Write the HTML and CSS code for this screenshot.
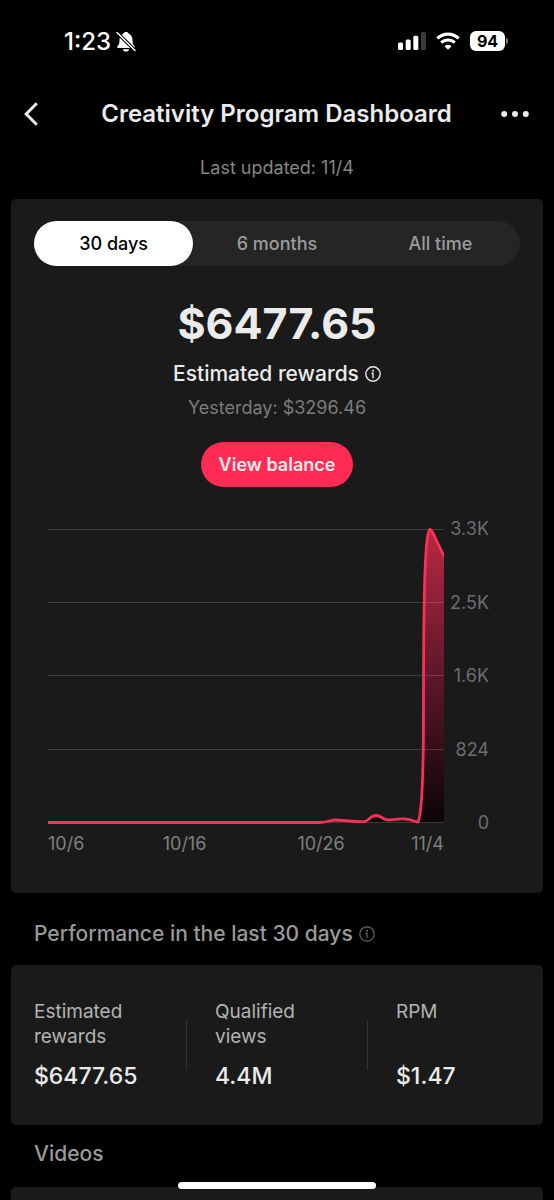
FILE: index.html
```html
<!DOCTYPE html>
<html lang="en">
<head>
<meta charset="utf-8">
<meta name="viewport" content="width=device-width, initial-scale=1">
<title>Creativity Program Dashboard</title>
<link rel="stylesheet" href="styles.css">
</head>
<body>
<div class="app">
  <div class="status">
    <div class="status-left">
      <span class="clock">1:23</span>
      <svg class="bell" viewBox="0 0 20 21" width="20" height="21" aria-hidden="true">
        <path fill="#fff" d="M10 1c1.400 0 2.300.7 2.700 1.700C15.400 3.700 16.500 6 16.500 9c0 3.600.8 4.900 2 6.100.7.800.4 2-.7 2H2.200c-1.100 0-1.400-1.200-.7-2C2.700 13.900 3.500 12.600 3.500 9c0-3 1.100-5.300 3.800-6.300C7.700 1.700 8.600 1 10 1zM6.800 18.200h6.400c-.3 1.500-1.500 2.300-3.200 2.300s-2.900-.8-3.200-2.300z"/>
        <path stroke="#000" stroke-width="3.400" d="M1 1.500l18 18"/>
        <path stroke="#fff" stroke-width="1.500" stroke-linecap="round" d="M1 1.500l18 18"/>
      </svg>
    </div>
    <div class="status-right">
      <svg viewBox="0 0 28 18" width="28" height="18" aria-hidden="true">
        <g fill="#fff"><rect y="10.500" width="5" height="7.500" rx="1.500"/><rect x="7.700" y="7.500" width="5" height="10.500" rx="1.500"/><rect x="15.300" y="3.800" width="5" height="14.200" rx="1.500"/></g>
        <rect x="23" width="5" height="18" rx="1.500" fill="#3a3a3a"/>
      </svg>
      <svg viewBox="0 0 24 18" width="24" height="18" aria-hidden="true">
        <g fill="none" stroke="#fff" stroke-width="3.200"><path d="M1.300 6.400a15.300 15.300 0 0 1 21.400 0"/><path d="M5.300 10.700a9.600 9.600 0 0 1 13.400 0"/></g>
        <path fill="#fff" d="M12 17.800l-3.500-3.500a5 5 0 0 1 7 0z"/>
      </svg>
      <div class="battery"><span class="battery-level">94</span><span class="battery-tip"></span></div>
    </div>
  </div>

  <header class="nav">
    <button class="icon-button" type="button" aria-label="Back">
      <svg viewBox="0 0 14 24" width="14" height="24" aria-hidden="true"><path fill="none" stroke="#ebebeb" stroke-width="3" d="M12.800 1.200L2.200 12l10.600 10.800"/></svg>
    </button>
    <h1 class="title">Creativity Program Dashboard</h1>
    <button class="icon-button" type="button" aria-label="More options">
      <svg viewBox="0 0 28 6" width="28" height="6" aria-hidden="true"><g fill="#ebebeb"><circle cx="3.200" cy="3" r="3"/><circle cx="14" cy="3" r="3"/><circle cx="24.800" cy="3" r="3"/></g></svg>
    </button>
  </header>
  <p class="updated">Last updated: 11/4</p>

  <main class="content">
    <section class="card rewards">
      <div class="tabs" role="tablist">
        <button class="tab tab-active" type="button" role="tab" aria-selected="true">30 days</button>
        <button class="tab" type="button" role="tab" aria-selected="false">6 months</button>
        <button class="tab" type="button" role="tab" aria-selected="false">All time</button>
      </div>
      <p class="amount">$6477.65</p>
      <p class="amount-label">Estimated rewards
        <svg class="info" viewBox="0 0 16 16" width="16" height="16" aria-hidden="true"><circle cx="8" cy="8" r="7.200" fill="none" stroke="currentColor" stroke-width="1.400"/><circle cx="8" cy="4.800" r="1" fill="currentColor"/><path fill="none" stroke="currentColor" stroke-width="1.400" d="M6.500 7.300H8v4.900"/></svg>
      </p>
      <p class="yesterday">Yesterday: $3296.46</p>
      <button class="balance" type="button">View balance</button>

      <div class="chart">
        <svg class="plot" viewBox="0 0 396 316" role="img" aria-label="Estimated rewards from 10/6 to 11/4">
          <defs>
            <linearGradient id="fill" gradientUnits="userSpaceOnUse" x1="0" y1="11" x2="0" y2="304">
              <stop offset="0" stop-color="#b92843"/>
              <stop offset="0.500" stop-color="#5f1729"/>
              <stop offset="1" stop-color="#0a0506"/>
            </linearGradient>
          </defs>
          <path fill="url(#fill)" d="M276 304.500C281 303 284 302 288 302C300 302.500 310 304 317 303.500C321 302 323 297.500 328 297.500C333 297.500 335 302 340 302C347 302 350 300.500 357 301C364 301.500 367 304 370 304C374 297 375.500 255 375.500 190C375.500 110 376 11.500 382 11.500C384 11.500 386 18 396 38V304.500Z"/>
          <g stroke="#fff" stroke-opacity="0.170" stroke-width="1"><path d="M0 11.500H396M0 84.500H396M0 157.500H396M0 231.500H396M0 304.500H396"/></g>
          <path fill="none" stroke="#f9305a" stroke-width="2.800" stroke-linejoin="round" d="M0 304.500H272C281 304 282 302 288 302C300 302.500 310 304.500 317 303.500C321 302 323 297.500 328 297.500C333 297.500 335 302 340 302C347 302 350 300.500 357 301C364 301.500 367 304 370 304C374 297 375.500 255 375.500 190C375.500 110 376 11.500 382 11.500C384 11.500 386 18 396 38"/>
        </svg>
        <div class="y-axis"><span>3.3K</span><span>2.5K</span><span>1.6K</span><span>824</span><span>0</span></div>
        <div class="x-axis"><span>10/6</span><span>10/16</span><span>10/26</span><span>11/4</span></div>
      </div>
    </section>

    <h2 class="section-title">Performance in the last 30 days
      <svg class="info info-dim" viewBox="0 0 16 16" width="16" height="16" aria-hidden="true"><circle cx="8" cy="8" r="7.200" fill="none" stroke="currentColor" stroke-width="1.200"/><circle cx="8" cy="4.800" r="1" fill="currentColor"/><path fill="none" stroke="currentColor" stroke-width="1.200" d="M6.500 7.300H8v4.900"/></svg>
    </h2>
    <section class="card stats">
      <div class="stat"><p class="stat-label">Estimated rewards</p><p class="stat-value">$6477.65</p></div>
      <div class="divider"></div>
      <div class="stat"><p class="stat-label">Qualified views</p><p class="stat-value">4.4M</p></div>
      <div class="divider"></div>
      <div class="stat"><p class="stat-label">RPM</p><p class="stat-value">$1.47</p></div>
    </section>

    <h2 class="section-title section-videos">Videos</h2>
    <section class="card videos" aria-label="Videos"></section>
  </main>
  <div class="home-indicator"></div>
</div>
</body>
</html>
```
FILE: styles.css
```css
* { box-sizing: border-box; }

body {
  margin: 0;
  background: #000;
  color: #ebebeb;
  font-family: Inter, "Liberation Sans", sans-serif;
}

p, h1, h2 { margin: 0; }

button {
  border: 0;
  padding: 0;
  background: none;
  color: inherit;
  font: inherit;
}

.app {
  display: flex;
  flex-direction: column;
  min-height: 100vh;
}

.status {
  display: flex;
  justify-content: space-between;
  align-items: center;
  height: 82px;
  padding: 0 46px 0 64px;
  color: #fff;
}

.status-left, .status-right { display: flex; align-items: center; }
.status-left { gap: 5px; }
.status-right { gap: 10px; }
.clock { padding-top: 2px; font-size: 24px; line-height: 28px; font-weight: 500; }
.battery { display: flex; align-items: center; gap: 1px; }

.battery-level {
  width: 35px;
  border-radius: 6px;
  background: #fff;
  color: #000;
  font-size: 16px;
  line-height: 20px;
  font-weight: 700;
  text-align: center;
}

.battery-tip {
  width: 2px;
  height: 6px;
  border-radius: 0 2px 2px 0;
  background: #777;
}

.nav {
  display: flex;
  justify-content: space-between;
  align-items: center;
  height: 64px;
  padding: 0 25px 0 24px;
}

.icon-button {
  display: flex;
  align-items: center;
  width: 28px;
  height: 44px;
}

.title { font-size: 24px; line-height: 30px; font-weight: 600; }

.updated {
  padding: 11px 0 20px;
  color: #868686;
  font-size: 18px;
  line-height: 22px;
  text-align: center;
}

.content {
  display: flex;
  flex: 1;
  flex-direction: column;
  padding: 0 11px;
}

.card { border-radius: 5px; background: #1a1a1a; }

.rewards {
  display: flex;
  flex-direction: column;
  align-items: center;
  padding: 22px 23px 39px;
}

.tabs {
  display: grid;
  grid-template-columns: repeat(3, 1fr);
  gap: 4px;
  align-self: stretch;
  border-radius: 23px;
  background: #252525;
}

.tab {
  height: 45px;
  border-radius: 23px;
  color: #9c9c9c;
  font-size: 18px;
  font-weight: 500;
}

.tab-active { background: #fff; color: #000; }

.amount {
  margin-top: 29px;
  font-size: 43px;
  line-height: 56px;
  font-weight: 700;
}

.amount-label {
  display: flex;
  align-items: center;
  gap: 6px;
  margin-top: 10px;
  font-size: 21px;
  line-height: 26px;
  font-weight: 500;
}

.yesterday {
  margin-top: 10px;
  color: #7c7c7c;
  font-size: 18px;
  line-height: 22px;
}

.balance {
  height: 45px;
  margin-top: 23px;
  padding: 0 18px;
  border-radius: 23px;
  background: #fe2c55;
  font-size: 18px;
  font-weight: 600;
}

.chart {
  display: grid;
  grid-template-columns: 1fr 45px;
  align-self: stretch;
  margin-top: 31px;
  padding: 0 31px 0 14px;
}

.plot { display: block; width: 100%; }

.y-axis {
  display: flex;
  flex-direction: column;
  justify-content: space-between;
  color: #6d6d72;
  font-size: 18px;
  line-height: 22px;
  text-align: right;
}

.x-axis {
  display: grid;
  grid-template-columns: 15fr 30fr 30fr 12fr;
  color: #808080;
  font-size: 18px;
  line-height: 20px;
  text-align: center;
}

.x-axis span:first-child { text-align: left; }
.x-axis span:last-child { text-align: right; }

.section-title {
  display: flex;
  align-items: center;
  gap: 6px;
  padding: 25px 23px 15px;
  color: #999;
  font-size: 21px;
  line-height: 32px;
  font-weight: 500;
}

.info-dim { color: #666; }

.stats {
  display: grid;
  grid-template-columns: 152fr 1px 180fr 1px 175fr;
  align-items: center;
  padding: 34px 0 34px 23px;
}

.stat { display: flex; flex-direction: column; align-self: stretch; justify-content: space-between; }
.divider + .stat { padding-left: 28px; }

.stat-label {
  max-width: 110px;
  color: #b3b3b3;
  font-size: 19px;
  line-height: 25px;
}

.stat-value {
  margin-top: 12px;
  font-size: 23px;
  line-height: 30px;
  font-weight: 500;
}

.divider { height: 50px; background: #333; }

.section-videos { padding: 13px 23px 17px; }

.videos { flex: 1; min-height: 13px; border-radius: 5px 5px 0 0; }

.home-indicator {
  position: fixed;
  bottom: 11px;
  left: 50%;
  width: 198px;
  height: 7px;
  margin-left: -99px;
  border-radius: 4px;
  background: #fff;
}
```
